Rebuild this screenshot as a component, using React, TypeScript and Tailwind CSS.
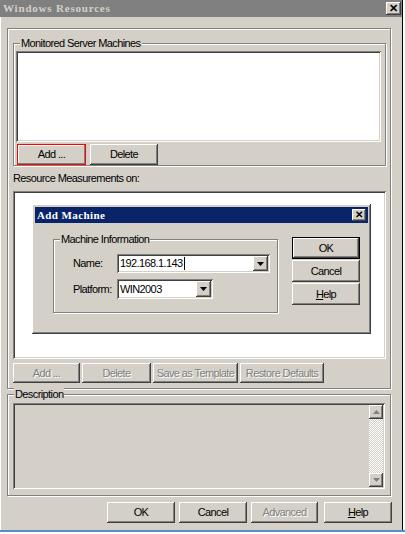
import React from 'react';

const raised =
  'shadow-[inset_-1px_-1px_#404040,inset_1px_1px_#ffffff,inset_-2px_-2px_#808080,inset_2px_2px_#d4d0c8]';
const sunken =
  'shadow-[inset_1px_1px_#808080,inset_-1px_-1px_#ffffff,inset_2px_2px_#404040,inset_-2px_-2px_#d4d0c8]';
const etched = 'border border-[#808080] shadow-[inset_1px_1px_#ffffff,1px_1px_#ffffff]';

function Button({
  children,
  className = '',
  disabled = false,
}: {
  children: React.ReactNode;
  className?: string;
  disabled?: boolean;
}) {
  return (
    <div
      className={`flex shrink-0 items-center justify-center bg-[#d4d0c8] ${raised} ${
        disabled ? 'text-[#808080] [text-shadow:1px_1px_0_#ffffff]' : 'text-black'
      } ${className}`}
    >
      {children}
    </div>
  );
}

function Group({
  label,
  className = '',
  children,
}: {
  label: string;
  className?: string;
  children?: React.ReactNode;
}) {
  return (
    <div className={`relative shrink-0 ${etched} ${className}`}>
      <span className="absolute -top-[7px] left-[6px] bg-[#d4d0c8] px-[1px] leading-[13px]">
        {label}
      </span>
      {children}
    </div>
  );
}

function Arrow({ up = false, color = '#000000' }: { up?: boolean; color?: string }) {
  return (
    <svg width="7" height="4" viewBox="0 0 7 4">
      <path d={up ? 'M0 4h7L3.5 0z' : 'M0 0h7L3.5 4z'} fill={color} />
    </svg>
  );
}

function Combo({
  value,
  className = '',
  caret = false,
}: {
  value: string;
  className?: string;
  caret?: boolean;
}) {
  return (
    <div className={`flex items-center bg-white p-[2px] ${sunken} ${className}`}>
      <div className="flex flex-1 items-center pl-[1px]">
        <span className="leading-[13px]">{value}</span>
        {caret && <span className="ml-[1px] h-[13px] w-[1px] bg-black" />}
      </div>
      <div className={`flex h-full w-[15px] items-center justify-center bg-[#d4d0c8] ${raised}`}>
        <Arrow />
      </div>
    </div>
  );
}

export default function App() {
  return (
    <div className="h-[534px] w-[405px] bg-white font-['Liberation_Sans',Arial,sans-serif] text-[11px] tracking-[-0.6px] text-black">
      <div className="flex h-[530px] w-[403px] flex-col border-r border-black bg-[#d4d0c8] shadow-[inset_1px_0_#ffffff]">
        {/* title bar */}
        <div className="flex h-[17px] shrink-0 items-center justify-between bg-[#808080] pl-[3px] pr-[1px]">
          <span className="font-['Liberation_Serif',serif] text-[11px] font-bold tracking-[0.8px] text-[#d4d0c8]">
            Windows Resources
          </span>
          <div className={`flex h-[13px] w-[15px] items-center justify-center bg-[#d4d0c8] ${raised}`}>
            <span className="text-[11px] font-bold leading-none tracking-normal">✕</span>
          </div>
        </div>

        <div className="flex flex-col pl-[7px] pt-[11px]">
          {/* outer panel */}
          <div className={`flex h-[361px] w-[384px] shrink-0 flex-col pl-[5px] pt-[14px] ${etched}`}>
            <Group label="Monitored Server Machines" className="flex h-[123px] w-[373px] flex-col pl-[2px] pt-[7px]">
              <div className={`h-[91px] w-[365px] bg-white ${sunken}`} />
              <div className="mt-[2px] flex gap-[4px] pl-[1px]">
                <Button className="h-[21px] w-[69px] border border-[#ff0000] shadow-[inset_-1px_-1px_#808080,inset_1px_1px_#ffffff]">
                  Add ...
                </Button>
                <Button className="h-[21px] w-[68px]">Delete</Button>
              </div>
            </Group>

            <div className="flex h-[25px] shrink-0 items-center">Resource Measurements on:</div>

            <div className={`h-[168px] w-[373px] shrink-0 bg-white pl-[19px] pt-[13px] ${sunken}`}>
              {/* Add Machine dialog */}
              <div className={`flex h-[130px] w-[339px] flex-col bg-[#d4d0c8] p-[3px] ${raised}`}>
                <div className="flex h-[16px] shrink-0 items-center justify-between bg-[#0a246a] pl-[2px] pr-[2px]">
                  <span className="font-['Liberation_Serif',serif] text-[11px] font-bold tracking-[0.4px] text-white">
                    Add Machine
                  </span>
                  <div className={`flex h-[12px] w-[14px] items-center justify-center bg-[#d4d0c8] ${raised}`}>
                    <span className="text-[10px] font-bold leading-none tracking-normal">✕</span>
                  </div>
                </div>
                <div className="flex pl-[18px] pt-[14px]">
                  <Group label="Machine Information" className="mt-[2px] flex h-[74px] w-[225px] flex-col pl-[19px] pt-[14px]">
                    <div className="flex h-[19px] items-center">
                      <span className="w-[44px]">Name:</span>
                      <Combo value="192.168.1.143" caret className="h-[19px] w-[153px]" />
                    </div>
                    <div className="mt-[6px] flex h-[20px] items-center">
                      <span className="w-[44px]">Platform:</span>
                      <Combo value="WIN2003" className="h-[20px] w-[96px]" />
                    </div>
                  </Group>
                  <div className="ml-[14px] flex flex-col gap-[1px]">
                    <Button className="h-[22px] w-[68px] shadow-[inset_0_0_0_1px_#000000,inset_-2px_-2px_#404040,inset_2px_2px_#ffffff,inset_-3px_-3px_#808080]">
                      OK
                    </Button>
                    <Button className="h-[22px] w-[68px]">Cancel</Button>
                    <Button className="h-[22px] w-[68px]">
                      <span>
                        <span className="underline">H</span>elp
                      </span>
                    </Button>
                  </div>
                </div>
              </div>
            </div>

            <div className="mt-[4px] flex h-[20px] shrink-0">
              <Button disabled className="h-[20px] w-[67px]">
                Add ...
              </Button>
              <Button disabled className="ml-[2px] h-[20px] w-[69px]">
                Delete
              </Button>
              <Button disabled className="ml-[2px] h-[20px] w-[85px]">
                Save as Template
              </Button>
              <Button disabled className="ml-[2px] h-[20px] w-[84px]">
                Restore Defaults
              </Button>
            </div>
          </div>

          {/* description */}
          <Group label="Description" className="mt-[5px] flex h-[102px] w-[384px] pl-[5px] pt-[8px]">
            <div className={`flex h-[86px] w-[372px] justify-end bg-[#d4d0c8] p-[2px] ${sunken}`}>
              <div className="flex h-full w-[14px] flex-col">
                <div className={`flex h-[14px] shrink-0 items-center justify-center bg-[#d4d0c8] ${raised}`}>
                  <Arrow up color="#808080" />
                </div>
                <div className="flex-1 bg-[repeating-conic-gradient(#d4d0c8_0%_25%,#ffffff_0%_50%)] bg-[length:2px_2px]" />
                <div className={`flex h-[14px] shrink-0 items-center justify-center bg-[#d4d0c8] ${raised}`}>
                  <Arrow color="#808080" />
                </div>
              </div>
            </div>
          </Group>

          {/* bottom buttons */}
          <div className="mt-[6px] flex pl-[100px]">
            <Button className="h-[21px] w-[68px]">OK</Button>
            <Button className="ml-[4px] h-[21px] w-[68px]">Cancel</Button>
            <Button disabled className="ml-[4px] h-[21px] w-[67px]">
              Advanced
            </Button>
            <Button className="ml-[6px] h-[21px] w-[68px]">
              <span>
                <span className="underline">H</span>elp
              </span>
            </Button>
          </div>
        </div>
      </div>
      <div className="h-[2px] w-full bg-[#5b8bc9]" />
    </div>
  );
}
